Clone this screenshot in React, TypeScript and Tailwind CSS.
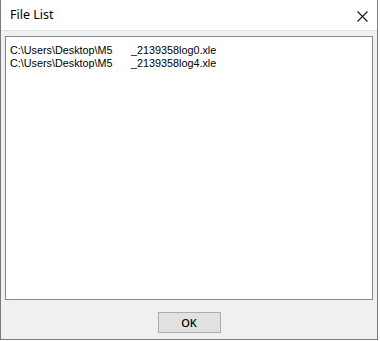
export default function App() {
  const files = [
    ["C:\\Users\\Desktop\\M5", "_2139358log0.xle"],
    ["C:\\Users\\Desktop\\M5", "_2139358log4.xle"],
  ];

  return (
    <div className="h-[341px] w-[380px] bg-white">
      <div className="flex h-[340px] w-[378px] flex-col border-x border-b border-[#7a7a7a] bg-[#f0f0f0]">
        {/* title bar */}
        <div className="flex h-[31px] items-center justify-between border-b border-[#e3e3e3] bg-white pl-[9px] pr-[9px]">
          <span className="font-['Noto_Sans',sans-serif] text-[12.5px] text-black">File List</span>
          <svg width="11" height="11" viewBox="0 0 11 11" className="mt-[2px]">
            <path d="M0.5 0.5 L10.5 10.5 M10.5 0.5 L0.5 10.5" stroke="#1a1a1a" strokeWidth="1.1" />
          </svg>
        </div>

        {/* list box */}
        <div className="mx-[4px] mt-[5px] h-[264px] border border-[#828790] bg-white px-[4px] pt-[7px] font-['Liberation_Sans',sans-serif] text-[10.8px] leading-[12.5px] text-black">
          {files.map(([dir, name], i) => (
            <div key={i} className="flex">
              <span className="w-[121px]">{dir}</span>
              <span>{name}</span>
            </div>
          ))}
        </div>

        {/* footer */}
        <div className="flex flex-1 items-start justify-center pt-[12px]">
          <button className="h-[21px] w-[63px] border border-[#adadad] bg-[#e1e1e1] font-['Noto_Sans',sans-serif] text-[11px] font-medium leading-none text-black">
            OK
          </button>
        </div>
      </div>
    </div>
  );
}
